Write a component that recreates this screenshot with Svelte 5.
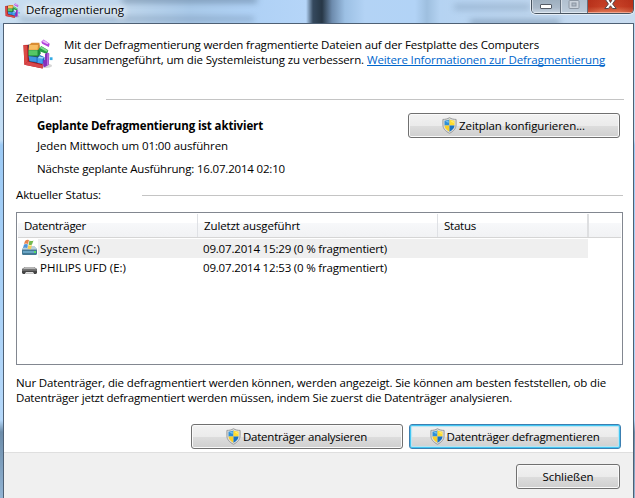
<script>
  const disks = [
    { name: 'System (C:)', w: 60, last: '09.07.2014 15:29 (0 % fragmentiert)', selected: true },
    { name: 'PHILIPS UFD (E:)', w: 86, last: '09.07.2014 12:53 (0 % fragmentiert)', selected: false }
  ];

  // Spreads the letters so that a label occupies the given width.
  function fit(node, width) {
    const natural = node.getBoundingClientRect().width;
    node.style.letterSpacing = `${(width - natural) / node.textContent.length}px`;
  }
</script>

{#snippet label(text, width)}<span class="t" use:fit={width}>{text}</span>{/snippet}

{#snippet shield()}
  <svg class="shield" width="15" height="17" viewBox="0 0 15 17">
    <path d="M7.5.7C5.500 2 3.200 2.400.900 2.400v5.400c0 3.800 2.600 6.500 6.600 8.500 4-2 6.600-4.700 6.600-8.500V2.400C11.800 2.400 9.500 2 7.500.7Z" fill="#dededc" stroke="#9a9c9d" stroke-width="1" />
    <path d="M7.500 2.300C6 3.300 4.300 3.700 2.500 3.800V8.500h5Z" fill="#2e8fd8" />
    <path d="M7.500 2.300C9 3.300 10.700 3.700 12.500 3.800V8.500h-5Z" fill="#ffdb2d" />
    <path d="M2.500 8.500c.2 2.700 2 4.700 5 6.200V8.500Z" fill="#f9cf27" />
    <path d="M12.500 8.500c-.2 2.700-2 4.700-5 6.200V8.500Z" fill="#1972c4" />
    <path d="M3.300 4.500 6.700 3.600V6Z" fill="#75c0ef" />
    <path d="M8.300 3.700 11.700 4.500v1.800Z" fill="#fff17b" />
  </svg>
{/snippet}

{#snippet defrag(size)}
  <svg class="defrag" width={size} height={size} viewBox="0 0 32 32">
    <ellipse cx="22" cy="28.500" rx="9" ry="2.500" fill="#777" opacity=".3" />
    <path d="M.5 6.500 7 6v16l14 3.500v6L1.500 27.500Z" fill="#a81722" />
    <path d="M.5 6.500 4.500 7 5 24l-3.500 3.500Z" fill="#dc4a45" />
    <path d="m5 24 16 4v3.500L1.500 27.500Z" fill="#d8474b" />
    <path d="M5.500 6h12v14l4 .500v6L6.500 24Z" fill="#35505f" />
    <path d="m6.500 6.500 2.500-2.500h8.500l.5 6.500-2 1.500H6Z" fill="#d98d35" />
    <path d="M6.500 6.500h9.500l-.5 5H6.200Z" fill="#f7bd62" />
    <path d="M6 12h9.500l2.500-1.500 1 5-2.500 3H6Z" fill="#198a3a" />
    <path d="M6 12h9.500v5.500H6Z" fill="#55c765" />
    <path d="m6 18.500 9.500 1L18 17l5 2.500V25l-2 1.500L7 23.500Z" fill="#1765bd" />
    <path d="m6 18.500 8.500 1v5L7 23.500Z" fill="#3f97e0" />
    <path d="m15.500 20.500 5.500.500v5.500l-5.500-1Z" fill="#45a3ee" />
    <path d="m15.500 20.500 2-2 5 1.200L21 21Z" fill="#a6dcfa" />
    <path d="m17 10 2.500-2.500 7.500 4.500-1.500 4-8-3Z" fill="#249e45" />
    <path d="m18 9.500 1.500-1.500 7 4-1.500 1.500Z" fill="#7bd98b" />
    <path d="m19.500 3 2.500-2.500 6.500 4.500-1 3.500-7-3.500Z" fill="#b243dc" />
    <path d="m20.500 2.800 1.700-1.700 5 3.500-1 1Z" fill="#eabaf7" />
    <path d="m23.500 16 2.500-1.500 2 1-.5 12-4.500 2.500-1.500-1V23l2-1Z" fill="#8730bb" />
    <path d="m26 15 1.500.5-.5 12-1.500 1Z" fill="#be73df" />
    <path d="M28.500 19.500h3v3h-3Z" fill="#35ace5" />
  </svg>
{/snippet}

<main class="window">
  <header class="titlebar">
    <div class="smudge s1"></div>
    <div class="smudge s2"></div>
    <div class="smudge s3"></div>
    <div class="smudge s4"></div>
    <div class="caption">{@render defrag(15)}{@render label('Defragmentierung', 98)}</div>
    <div class="controls">
      <div class="ctl min"><svg width="12" height="5"><rect x=".5" y=".5" width="11" height="4" rx=".5" fill="#fff" stroke="#555c66" /></svg></div>
      <div class="ctl max"><svg width="12" height="9"><rect x="1" y=".5" width="10" height="8" rx="1" fill="#cbd3dc" stroke="#8c96a2" /><rect x="4" y="3" width="4" height="3" fill="#aeb9c5" stroke="#8c96a2" /></svg></div>
      <div class="ctl close"><svg width="13" height="11" viewBox="0 0 13 11"><path d="M1-1h3.500l2 3.500L8.500-1H12L8.600 4 12.200 8.500H8.500l-2-2.700-2 2.700H.8L4.400 4Z" fill="#fff" stroke="#574848" /></svg></div>
    </div>
  </header>

  <section class="client">
    <div class="intro">
      {@render defrag(30)}
      <div>
        <div class="line">{@render label('Mit der Defragmentierung werden fragmentierte Dateien auf der Festplatte des Computers', 475)}</div>
        <div class="line">{@render label('zusammengeführt, um die Systemleistung zu verbessern.', 300)}<a href="#info">{@render label('Weitere Informationen zur Defragmentierung', 238)}</a></div>
      </div>
    </div>

    <div class="group g1">{@render label('Zeitplan:', 46)}<i></i></div>
    <div class="schedule">
      <div class="details">
        <div class="line bold">{@render label('Geplante Defragmentierung ist aktiviert', 226)}</div>
        <div class="line second">{@render label('Jeden Mittwoch um 01:00 ausführen', 191)}</div>
        <div class="line third">{@render label('Nächste geplante Ausführung: 16.07.2014 02:10', 248)}</div>
      </div>
      <button class="btn wide">{@render shield()}{@render label('Zeitplan konfigurieren...', 126)}</button>
    </div>
    <div class="group g2">{@render label('Aktueller Status:', 85)}<i></i></div>

    <div class="list">
      <div class="row head">
        <div class="c1">{@render label('Datenträger', 62)}</div>
        <div class="c2">{@render label('Zuletzt ausgeführt', 96)}</div>
        <div class="c3">{@render label('Status', 32)}</div>
      </div>
      {#each disks as d}
        <div class="row item">
          <div class="glyph">
            {#if d.selected}
              <svg width="17" height="17" viewBox="0 0 17 17">
                <path d="m1 10 3-3h9l3 3v5l-2 1H2l-1-1Z" fill="#8ba9bb" />
                <path d="m1 10 3-3h9l3 3Z" fill="#b9d0df" />
                <path d="M1 11h15v4l-1 1H2l-1-1Z" fill="#447995" />
                <path d="M2 12h11v2H2Z" fill="#6aa5c5" />
                <path d="M13 12h2v2h-2Z" fill="#58e06a" />
                <path d="M4 2q2-2 4-1L7 5Q5 4 3 5Z" fill="#e6844e" />
                <path d="M8.500 1.500q2 1 4 0L11 5.500q-2 1-3.500 0Z" fill="#74b950" />
                <path d="M3 5.500q2-1 4 0L6 9Q4 8 2 9Z" fill="#4d96dc" />
                <path d="M7.500 6q2 1 3.500 0l-1 4Q8 10.500 6.500 9.500Z" fill="#f4cd58" />
              </svg>
            {:else}
              <svg width="17" height="17" viewBox="0 0 17 17">
                <path d="m1 11 3-2h9l3 2v4l-1 1h-2l-1-2H5l-1 2H2l-1-1Z" fill="#454545" />
                <path d="m1 11.500 3-2.500h9l3 2.500Z" fill="#b4b4b4" />
                <path d="M1 12q7-1.500 15 0v1H1Z" fill="#6b6b6b" />
                <path d="m4 16 1-1.500h7l1 1.500Z" fill="#c8c8c8" />
              </svg>
            {/if}
          </div>
          <div class="cells" class:selected={d.selected}>
            <div class="name">{@render label(d.name, d.w)}</div>
            <div>{@render label(d.last, 184)}</div>
          </div>
        </div>
      {/each}
    </div>

    <div class="note">
      <div class="line">{@render label('Nur Datenträger, die defragmentiert werden können, werden angezeigt. Sie können am besten feststellen, ob die', 590)}</div>
      <div class="line">{@render label('Datenträger jetzt defragmentiert werden müssen, indem Sie zuerst die Datenträger analysieren.', 496)}</div>
    </div>
    <div class="actions">
      <button class="btn wide">{@render shield()}{@render label('Datenträger analysieren', 124)}</button>
      <button class="btn wide default">{@render shield()}{@render label('Datenträger defragmentieren', 153)}</button>
    </div>
    <footer><button class="btn small">{@render label('Schließen', 51)}</button></footer>
  </section>
</main>

<style>
  :global(body) { margin: 0; overflow: hidden; }
  .window {
    width: 635px; height: 498px; box-sizing: border-box; padding: 0 1px 0 3px;
    display: flex; flex-direction: column; position: relative; overflow: hidden;
    background: linear-gradient(#bed8f2 0, #c4dff6 140px, #9ccaf5 145px, #b5d8fa 420px, #6d8daa 432px, #91b3d3 100%);
    font: 11.5px/15px "Open Sans", "Noto Sans", sans-serif; color: #000;
  }
  .t { white-space: pre; display: inline-block; }
  .titlebar {
    height: 23px; flex: none; display: flex; justify-content: space-between; margin: 0 -1px 0 -3px;
    position: relative; overflow: hidden;
    background: linear-gradient(90deg, #cadff1 0, #bdd5ec 130px, #a9c9e9 190px, #afd1f5 250px, #b5d5f8 306px, #35495e 313px, #273746 322px, #6d8bad 332px, #9cc0e4 345px, #b3d3f5 365px, #b2d3f6 415px, #9ebfdf 427px, #b5d3f2 440px, #bed6ef 530px, #c9dcf0 100%);
  }
  .smudge { position: absolute; filter: blur(3px); background: #536d88; opacity: .5; }
  .s1 { left: 122px; top: -4px; width: 135px; height: 7px; }
  .s2 { left: 20px; top: 17px; width: 234px; height: 4px; opacity: .42; }
  .s3 { left: 454px; top: 4px; width: 76px; height: 6px; opacity: .28; }
  .s4 { left: 470px; top: 20px; width: 90px; height: 5px; opacity: .5; }
  .caption { position: relative; display: flex; padding: 2px 0 0 5px; gap: 6px; height: 15px; text-shadow: 0 0 5px #fff, 0 0 8px #fff, 0 0 9px #fff; }
  .caption .defrag { margin-top: 1px; }
  .controls { position: relative; display: flex; width: 103px; height: 14px; margin-right: 1px; box-sizing: border-box; border: 1px solid #485460; border-top: 0; border-radius: 0 0 5px 5px; overflow: hidden; box-shadow: 0 0 0 1px #e5edf6; }
  .ctl { display: flex; justify-content: center; box-sizing: border-box; box-shadow: inset 0 -1px #dfe8f1, inset 1px 0 #ffffff70; }
  .min { width: 29px; border-right: 1px solid #65717f; padding-top: 4px; background: linear-gradient(#9eafbf, #aab9c9 60%, #c8d5e2); }
  .max { width: 27px; border-right: 1px solid #65717f; background: linear-gradient(#b1c0cf, #bdcbd9); }
  .close { flex: 1; background: linear-gradient(90deg, #a61e0b60, #c93b1d00 30%, #c93b1d00 70%, #a61e0b60), linear-gradient(#bf3a22, #c53f25 50%, #e17b56); box-shadow: inset 0 -1px #f0a590; }
  .client { flex: 1; min-height: 0; display: flex; flex-direction: column; background: #fff; border: solid #4e6074; border-width: 1px 1px 0 1px; border-radius: 1px 1px 0 0; }
  .line { height: 15px; white-space: nowrap; }
  .intro { display: flex; padding: 13px 0 0 19px; gap: 11px; height: 54px; }
  .intro .defrag { margin-top: 2px; }
  a { color: #0066cc; margin-left: 3px; text-decoration: none; display: inline-block; height: 13px; border-bottom: 1px solid #0066cc; }
  .group { display: flex; height: 15px; padding: 0 9px 0 12px; }
  .group i { height: 1px; background: #c4c4c4; flex: 1; }
  .g1 { margin-top: -1px; }
  .g1 i { margin: 9px 0 0 44px; }
  .g2 { padding-right: 10px; }
  .g2 i { margin: 8px 0 0 41px; }
  .schedule { display: flex; justify-content: space-between; height: 82px; padding: 0 13px 0 33px; box-sizing: border-box; }
  .details { padding-top: 13px; }
  .bold { font-weight: 700; }
  .second { margin-top: 5px; }
  .third { margin-top: 8px; }
  .btn {
    font: inherit; line-height: 15px; color: #000; display: flex; align-items: center; justify-content: center;
    box-sizing: border-box; height: 25px; padding: 0 0 1px; border: 1px solid #707070; border-radius: 3px;
    background: linear-gradient(#f2f2f2 0, #ebebeb 50%, #dddddd 51%, #cfcfcf 100%); box-shadow: inset 0 0 0 1px #fafafa;
  }
  .btn.wide { width: 212px; gap: 1px; padding-right: 1px; }
  .schedule .btn { margin-top: 8px; }
  .shield { flex: none; margin-right: 1px; }
  .default { border-color: #3c7fb1; box-shadow: inset 0 0 0 1px #43c6f2, inset 0 0 1px 2px #b9e5f3; }
  .list { margin: 10px 10px 0 12px; height: 153px; box-sizing: border-box; border: 1px solid #828790; padding: 1px; flex: none; }
  .row { display: flex; }
  .head { height: 24px; box-sizing: border-box; border-bottom: 1px solid #d5d5d5; background: linear-gradient(#fff 0, #fff 40%, #f7f8fa 41%, #f1f2f4 100%); margin-bottom: 1px; }
  .head > div { border-right: 1px solid #dfe1e5; box-sizing: border-box; padding: 4px 0 0 6px; }
  .head .c1 { width: 180px; }
  .head .c2 { width: 240px; }
  .head .c3 { width: 151px; border-right: 2px solid #dedfe1; }
  .item { height: 19px; }
  .item .glyph { width: 17px; margin-left: 3px; flex: none; }
  .cells { display: flex; width: 550px; padding: 2px 0 0 2px; box-sizing: border-box; }
  .cells .name { width: 163px; }
  .selected { background: #efefef; }
  .note { padding: 10px 0 0 12px; height: 49px; flex: none; }
  .actions { display: flex; justify-content: flex-end; gap: 6px; padding-right: 12px; height: 28px; flex: none; }
  footer { flex: 1; background: #f0f0f0; border-top: 1px solid #dfdfdf; display: flex; justify-content: flex-end; padding: 11px 13px 0 0; }
  .small { width: 104px; }
</style>
